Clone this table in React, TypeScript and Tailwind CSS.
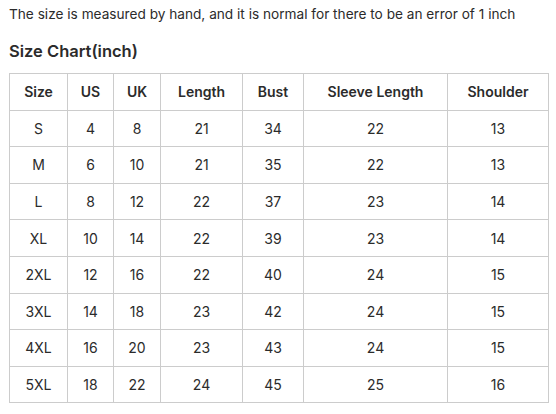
const headers = ["Size", "US", "UK", "Length", "Bust", "Sleeve Length", "Shoulder"];

const rows = [
  ["S", "4", "8", "21", "34", "22", "13"],
  ["M", "6", "10", "21", "35", "22", "13"],
  ["L", "8", "12", "22", "37", "23", "14"],
  ["XL", "10", "14", "22", "39", "23", "14"],
  ["2XL", "12", "16", "22", "40", "24", "15"],
  ["3XL", "14", "18", "23", "42", "24", "15"],
  ["4XL", "16", "20", "23", "43", "24", "15"],
  ["5XL", "18", "22", "24", "45", "25", "16"],
];

const widths = ["w-[58px]", "w-[46px]", "w-[47px]", "w-[82px]", "w-[61px]", "w-[144px]", "w-[101px]"];

const App = () => {
  return (
    <div className="w-[556px] h-[414px] bg-white px-[9px] pt-[4px] text-[#2b2b2b] font-['Inter',sans-serif]">
      <p className="text-[13.65px] leading-[20px]">
        The size is measured by hand, and it is normal for there to be an error of 1 inch
      </p>
      <h2 className="mt-[17px] text-[16.5px] leading-[20px] font-semibold">Size Chart(inch)</h2>

      <table className="mt-[12px] w-[539px] table-fixed border-collapse text-[14px] text-center">
        <colgroup>
          {widths.map((w, i) => (
            <col key={i} className={w} />
          ))}
        </colgroup>
        <thead>
          <tr className="h-[36.6px]">
            {headers.map((h) => (
              <th key={h} className="border border-[#ccc] font-semibold p-0">
                {h}
              </th>
            ))}
          </tr>
        </thead>
        <tbody>
          {rows.map((r) => (
            <tr key={r[0]} className="h-[36.6px]">
              {r.map((c, i) => (
                <td key={i} className="border border-[#ccc] p-0">
                  {c}
                </td>
              ))}
            </tr>
          ))}
        </tbody>
      </table>
    </div>
  );
};

export default App;
